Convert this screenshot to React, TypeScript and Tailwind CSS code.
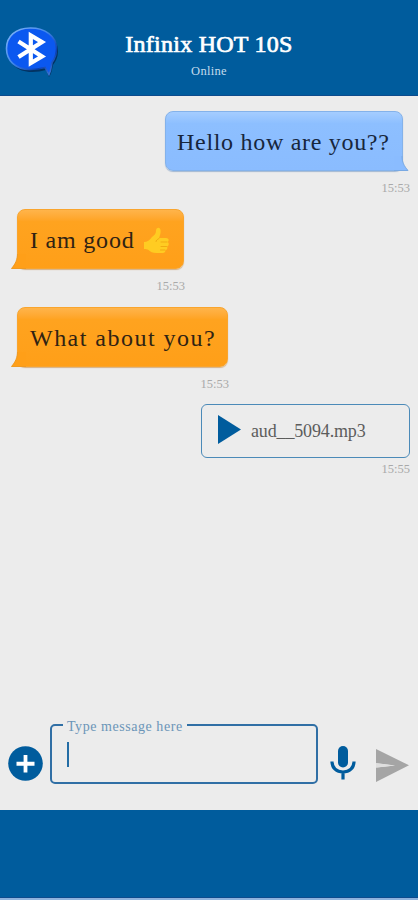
import React from "react";

const serif = "font-['Liberation_Serif',serif]";

function BluetoothLogo() {
  return (
    <svg className="mt-px block h-[54px] w-[58px] shrink-0" viewBox="0 0 58 54">
      <defs>
        <linearGradient id="rim" x1="0" y1="0" x2="1" y2="1">
          <stop offset="0" stopColor="#86b8fa" />
          <stop offset="0.45" stopColor="#3f86ea" />
          <stop offset="0.75" stopColor="#0a3fae" />
          <stop offset="1" stopColor="#4d8ae6" />
        </linearGradient>
      </defs>
      <path
        d="M31 2C15 2 7 11 7 23s9 21 24 21c5 0 10-1 14-2l3 7c3-4 3-8 4-12 3-4 5-8 5-14C57 10 45 2 31 2z"
        fill="#03264f"
        opacity="0.75"
        transform="translate(1 2)"
      />
      <path
        d="M30.500 2C15 2 6.500 11 6.500 22.500S15 43.500 30 43.500c6 0 11-1 15-2l4 7c2-4 2-7 3-12 3-4 4.500-8 4.500-14C56.500 10 45 2 30.500 2z"
        fill="#0b58f0"
        stroke="url(#rim)"
        strokeWidth="1.600"
      />
      <path
        d="M18.500 15.500 42 30.500 30.800 37V9.500L42 16 18.500 31"
        fill="none"
        stroke="#fff"
        strokeWidth="4.200"
      />
    </svg>
  );
}

function Thumb() {
  return (
    <svg className="block h-[27px] w-[27px]" viewBox="0 0 27 27">
      <path
        d="M1 15c3 0 6-2 8-5 2-2 4-3 4-6 0-4 4-4 4.500-1 .5 3-.5 5-1.500 8h7c3 0 3.500 3 1.500 4 2 1 1.500 4-.5 4.500 1 1.500 0 3.500-1.500 3.500 0 2-1 3-3 3h-6c-4 0-6-1-8-3-1-1-3-1-4.500-1z"
        fill="#ffcc22"
      />
      <path
        d="M24 15h-6m5.500 4.500h-5.500M22 23h-4.500M16 11.500c-2 1-3 2-3 3"
        fill="none"
        stroke="#f1ab12"
        strokeWidth="1"
        strokeLinecap="round"
      />
    </svg>
  );
}

function Time({ children }: { children: React.ReactNode }) {
  return (
    <div className="mt-[9px] h-[16px] text-[12.500px] leading-[16px] text-[#a9a9a9]">{children}</div>
  );
}

function Sent() {
  return (
    <div className="flex h-[98px] flex-col items-end pr-[8px]">
      <div className="relative mr-[7px] flex h-[60px] w-[238px] shrink-0 items-center rounded-[8px] border border-[#84b2ea] bg-linear-to-b from-[#a5cdff] via-[#8dbfff] via-20% to-[#8abcff] pt-[2px] pl-[11px] shadow-[0_1px_1px_#a4b8d2]">
        <svg className="absolute -right-[7px] -bottom-px h-[15px] w-[15px]" viewBox="0 0 15 15">
          <path d="M0 0h8c0 6 2 10 6 14.500H0z" fill="#8abcff" />
          <path d="M8 0c0 6 2 10 6 14.500H0" fill="none" stroke="#79a9e3" />
        </svg>
        <span className="relative text-[24px] leading-[30px] tracking-[0.700px] whitespace-nowrap text-[#17263c]">
          Hello how are you??
        </span>
      </div>
      <Time>15:53</Time>
    </div>
  );
}

function Received({ width, children }: { width: string; children: React.ReactNode }) {
  return (
    <div className={"ml-[17px] flex h-[98px] flex-col items-end " + width}>
      <div className="relative flex h-[60px] w-full shrink-0 items-center rounded-[8px] border border-[#f9a52e] bg-linear-to-b from-[#ffb44a] via-[#ffa31f] via-20% to-[#ff9f18] pt-[2px] pl-[12px] shadow-[0_1px_1px_#d6b184]">
        <svg className="absolute -bottom-px -left-[7px] h-[15px] w-[15px]" viewBox="0 0 15 15">
          <path d="M15 0H6.500c0 5-2 10-6 14.500H15z" fill="#ff9f18" />
          <path d="M6.500 0c0 5-2 10-6 14.500H15" fill="none" stroke="#ef9a23" />
        </svg>
        <div className="relative flex items-center text-[24px] leading-[30px] whitespace-nowrap text-[#302313]">
          {children}
        </div>
      </div>
      <div className="-mr-px">
        <Time>15:53</Time>
      </div>
    </div>
  );
}

export default function App() {
  return (
    <div className={"flex h-[900px] w-[418px] flex-col overflow-hidden bg-[#ececec] " + serif}>
      <header className="grid h-[96px] shrink-0 grid-cols-[60px_298px_60px] border-b border-[#0d4b8d] bg-[#005c9d] pt-[25px] text-white">
        <BluetoothLogo />
        <div className="flex flex-col items-center">
          <h1 className="mt-[5px] text-[24px] leading-[28px] font-normal tracking-[0.250px] whitespace-nowrap [-webkit-text-stroke:0.700px_white]">
            Infinix HOT 10S
          </h1>
          <p className="mt-[6px] text-[12.500px] leading-[14px] tracking-[0.300px] text-[#c3dbec]">Online</p>
        </div>
      </header>

      <main className="flex h-[598px] shrink-0 flex-col pt-[15px]">
        <Sent />
        <Received width="w-[167px]">
          <span className="tracking-[0.800px]">I am good</span>
          <span className="ml-[8px]">
            <Thumb />
          </span>
        </Received>
        <Received width="w-[211px]">
          <span className="tracking-[1.480px]">What about you?</span>
        </Received>
        <div className="-mt-px flex flex-col items-end pr-[8px]">
          <div className="flex h-[54px] w-[209px] items-center rounded-[6px] border-[1.500px] border-[#4b8ab8] pl-[16px]">
            <svg className="mb-[4px] h-[29px] w-[23px]" viewBox="0 0 23 29">
              <path d="M0 0v29l23-14.500z" fill="#005c9d" />
            </svg>
            <span className="ml-[10px] text-[18px] leading-[24px] tracking-[-0.150px] text-[#5c5c5c]">
              aud__5094.mp3
            </span>
          </div>
          <div className="-mt-[6px]">
            <Time>15:55</Time>
          </div>
        </div>
      </main>

      <form className="flex h-[116px] shrink-0 pl-[8px]" onSubmit={(e) => e.preventDefault()}>
        <svg className="mt-[52px] h-[35px] w-[35px] shrink-0" viewBox="0 0 35 35">
          <circle cx="17.500" cy="17.500" r="17.300" fill="#005c9d" />
          <path d="M17.500 9v17.500M8.500 17.750h18" stroke="#fff" strokeWidth="3.800" />
        </svg>
        <fieldset className="mt-[20px] ml-[7px] h-[70px] w-[268px] shrink-0 rounded-[5px] border-2 border-[#306fa5] pl-[11px]">
          <legend className="h-[22px] px-[4px] pt-[3px] text-[14px] leading-[19px] tracking-[0.550px] text-[#6b95b8]">
            Type message here
          </legend>
          <div className="mt-[6px] ml-[4px] h-[25px] w-[2px] bg-[#246da5]" />
        </fieldset>
        <svg className="mt-[52px] ml-[12px] h-[36px] w-[26px] shrink-0" viewBox="0 0 26 36">
          <rect x="8" y="0" width="10" height="21.500" rx="5" fill="#005c9d" />
          <path d="M2 15.500c0 6.500 4.500 10.500 11 10.500s11-4 11-10.500M13 26v7.500" fill="none" stroke="#005c9d" strokeWidth="3.200" />
        </svg>
        <svg className="mt-[55px] ml-[20px] h-[33px] w-[33px] shrink-0" viewBox="0 0 33 33">
          <path d="M0 0 33 16.300 0 33V18.500L19 16.500 0 14.300z" fill="#a5a5a5" />
          <path d="M0 14.300h1.500L19 16.500 1.500 18.500H0z" fill="#dedede" />
        </svg>
      </form>
      <footer className="h-[88px] shrink-0 border-b border-[#0d4b8d] bg-[#005c9d]" />
      <div className="h-[2px] shrink-0 bg-[#8fb3dd]" />
    </div>
  );
}
